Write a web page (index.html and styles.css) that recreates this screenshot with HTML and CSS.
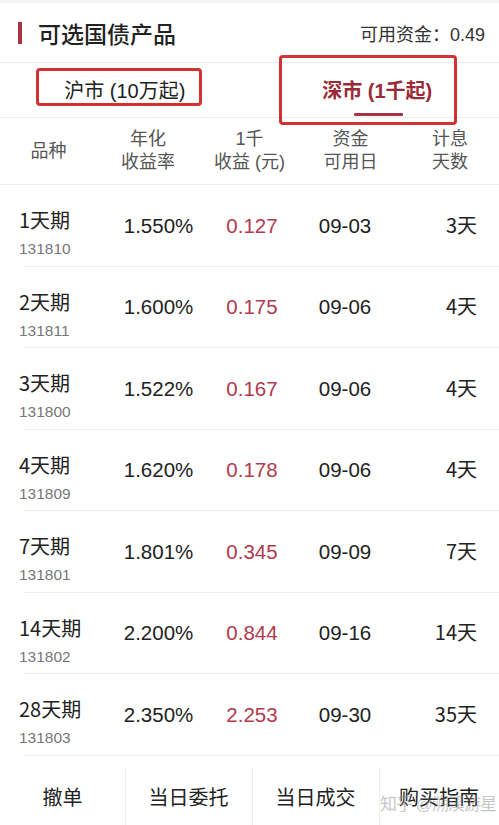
FILE: index.html
```html
<!DOCTYPE html>
<html lang="zh-CN">
<head>
<meta charset="utf-8">
<title>可选国债产品</title>
<link rel="stylesheet" href="styles.css">
</head>
<body>
<div class="page">
  <div class="topstrip"></div>
  <header class="head">
    <div class="title"><span class="bar"></span>可选国债产品</div>
    <div class="funds">可用资金：0.49</div>
  </header>
  <nav class="tabs">
    <div class="tab">沪市 (10万起)</div>
    <div class="tab active">深市 (1千起)<span class="underline"></span></div>
    <span class="mark mark-left"></span>
    <span class="mark mark-right"></span>
  </nav>
  <div class="thead">
    <div class="th">品种</div>
    <div class="th">年化<br>收益率</div>
    <div class="th">1千<br>收益 (元)</div>
    <div class="th">资金<br>可用日</div>
    <div class="th">计息<br>天数</div>
  </div>
  <div class="tbody">
    <div class="row"><div class="name"><div class="nm">1天期</div><div class="code">131810</div></div><div class="rate">1.550%</div><div class="inc">0.127</div><div class="date">09-03</div><div class="days">3天</div></div>
    <div class="row"><div class="name"><div class="nm">2天期</div><div class="code">131811</div></div><div class="rate">1.600%</div><div class="inc">0.175</div><div class="date">09-06</div><div class="days">4天</div></div>
    <div class="row"><div class="name"><div class="nm">3天期</div><div class="code">131800</div></div><div class="rate">1.522%</div><div class="inc">0.167</div><div class="date">09-06</div><div class="days">4天</div></div>
    <div class="row"><div class="name"><div class="nm">4天期</div><div class="code">131809</div></div><div class="rate">1.620%</div><div class="inc">0.178</div><div class="date">09-06</div><div class="days">4天</div></div>
    <div class="row"><div class="name"><div class="nm">7天期</div><div class="code">131801</div></div><div class="rate">1.801%</div><div class="inc">0.345</div><div class="date">09-09</div><div class="days">7天</div></div>
    <div class="row"><div class="name"><div class="nm">14天期</div><div class="code">131802</div></div><div class="rate">2.200%</div><div class="inc">0.844</div><div class="date">09-16</div><div class="days">14天</div></div>
    <div class="row"><div class="name"><div class="nm">28天期</div><div class="code">131803</div></div><div class="rate">2.350%</div><div class="inc">2.253</div><div class="date">09-30</div><div class="days">35天</div></div>
  </div>
  <footer class="foot">
    <div class="fbtn">撤单</div>
    <div class="fbtn">当日委托</div>
    <div class="fbtn">当日成交</div>
    <div class="fbtn">购买指南</div>
    <span class="watermark">知乎 @溯溪游星</span>
  </footer>
</div>
</body>
</html>
```

FILE: styles.css
```css
* { box-sizing: border-box; }
html, body { margin: 0; padding: 0; background: #fff; }
body {
  font-family: "Liberation Sans", "Noto Sans CJK SC", sans-serif;
  color: #222;
}
.page { width: 499px; height: 825px; overflow: hidden; position: relative; }
.topstrip { height: 3px; background: #f3f3f3; }
.head {
  height: 60px;
  display: flex;
  align-items: center;
  justify-content: space-between;
  padding: 0 14px 0 18px;
  border-bottom: 1px solid #eeeeee;
}
.title {
  display: flex;
  align-items: center;
  font-size: 23px;
  font-weight: 500;
  color: #222;
  font-family: "Noto Sans CJK SC", sans-serif;
}
.bar {
  width: 4px;
  height: 22px;
  background: #a8343f;
  margin-right: 16px;
}
.funds { font-size: 18px; color: #333; }
.tabs {
  position: relative;
  height: 55px;
  display: grid;
  grid-template-columns: 1fr 1fr;
  border-bottom: 1px solid #eeeeee;
}
.tab {
  position: relative;
  display: flex;
  align-items: center;
  justify-content: center;
  font-size: 20px;
  color: #222;
  padding-bottom: 2px;
}
.tab.active { color: #9a2b36; font-weight: bold; padding-left: 6px; }
.underline {
  position: absolute;
  left: 104px;
  width: 49px;
  bottom: 1px;
  height: 3px;
  background: #a8343f;
  border-radius: 1px;
}
.mark {
  position: absolute;
  border: 3px solid #d03330;
  border-radius: 4px;
}
.mark-left { left: 36px; top: 5px; width: 166px; height: 38px; }
.mark-right { left: 279px; top: -8px; width: 178px; height: 70px; }
.thead {
  height: 67px;
  display: grid;
  grid-template-columns: 97px 102px 101px 101px 98px;
  align-items: center;
  border-bottom: 1px solid #eeeeee;
}
.th {
  text-align: center;
  font-size: 18px;
  line-height: 23px;
  color: #555;
}
.row {
  position: relative;
  height: 81.5px;
  display: grid;
  grid-template-columns: 100px 100px 100px 100px 99px;
  align-items: center;
}
.row::after {
  content: "";
  position: absolute;
  left: 24px;
  right: 0;
  bottom: 0;
  height: 1px;
  background: #f0f0f0;
}
.name { padding-left: 19px; padding-top: 16px; }
.nm { font-size: 20px; line-height: 24px; color: #222; font-family: "Noto Sans CJK SC", sans-serif; }
.code { font-size: 15.5px; line-height: 20px; color: #777; margin-top: 7px; }
.rate { font-size: 20.5px; text-align: center; padding-left: 17px; }
.inc { font-size: 20.5px; text-align: center; color: #b23a4e; padding-left: 4px; }
.date { font-size: 20.5px; text-align: center; padding-right: 10px; }
.days { font-size: 20px; text-align: right; padding-right: 22px; padding-bottom: 3px; font-family: "Noto Sans CJK SC", sans-serif; }
.foot {
  position: relative;
  height: 70px;
  display: grid;
  grid-template-columns: 125px 127px 127px 120px;
}
.fbtn {
  position: relative;
  display: flex;
  align-items: center;
  justify-content: center;
  font-size: 20px;
  color: #222;
  padding-top: 12px;
}
.fbtn + .fbtn::before {
  content: "";
  position: absolute;
  left: 0;
  top: 12px;
  bottom: 0;
  width: 1px;
  background: #eeeeee;
}
.watermark {
  position: absolute;
  left: 380px;
  top: 34px;
  font-size: 17px;
  color: rgba(140, 140, 140, 0.5);
  white-space: nowrap;
  letter-spacing: -1px;
}
```
